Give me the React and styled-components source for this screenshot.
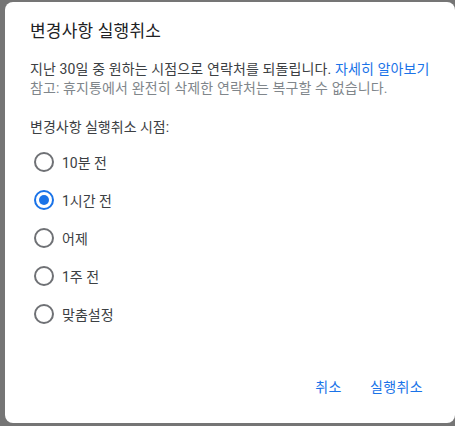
import styled, { createGlobalStyle } from 'styled-components';

const GlobalStyle = createGlobalStyle`
	html, body {
		margin: 0;
		padding: 0;
		background: #757575;
	}
	body {
		font-family: Roboto, "Noto Sans CJK KR", sans-serif;
	}
`;

const Backdrop = styled.div`
	width: 455px;
	height: 426px;
	padding: 2px 0 3px 5px;
	box-sizing: border-box;
	background: #757575;
`;

const Dialog = styled.div`
	width: 450px;
	height: 421px;
	box-sizing: border-box;
	background: #fff;
	border-radius: 8px;
	padding: 17px 24px 0 25px;
	display: flex;
	flex-direction: column;
	color: #202124;
`;

const Title = styled.h2`
	margin: 0;
	font-size: 17px;
	font-weight: 400;
	line-height: 24px;
	letter-spacing: 0.2px;
`;

const Desc = styled.p`
	margin: 17px 0 0;
	font-size: 14px;
	line-height: 19px;
	letter-spacing: 0.12px;
	color: ${({ $muted }) => ($muted ? '#80868b' : '#3c4043')};
	& + & {
		margin-top: 0;
	}
	a {
		color: #1a73e8;
		text-decoration: none;
	}
`;

const Label = styled.div`
	margin-top: 20px;
	font-size: 14px;
	line-height: 19px;
	color: #3c4043;
`;

const Options = styled.div`
	display: flex;
	flex-direction: column;
	gap: 18px;
	margin-top: 15px;
`;

const Option = styled.label`
	display: flex;
	align-items: center;
	gap: 8px;
	height: 20px;
	font-size: 14px;
	color: #3c4043;
	padding-left: 4px;
`;

const Radio = styled.span`
	width: 20px;
	height: 20px;
	box-sizing: border-box;
	border-radius: 50%;
	border: 2px solid ${({ $checked }) => ($checked ? '#1a73e8' : '#6f7175')};
	display: flex;
	align-items: center;
	justify-content: center;
	&::after {
		content: '';
		width: 10px;
		height: 10px;
		border-radius: 50%;
		background: #1a73e8;
		display: ${({ $checked }) => ($checked ? 'block' : 'none')};
	}
`;

const Actions = styled.div`
	margin-top: auto;
	display: flex;
	justify-content: flex-end;
	gap: 12px;
	padding-bottom: 19px;
`;

const TextButton = styled.button`
	background: none;
	border: none;
	padding: 0 8px;
	height: 36px;
	font-family: Roboto, "Noto Sans CJK KR", sans-serif;
	font-size: 14px;
	font-weight: 400;
	letter-spacing: 0.4px;
	color: #1a73e8;
	cursor: pointer;
`;

const options = [
	{ id: '10m', label: '10분 전' },
	{ id: '1h', label: '1시간 전' },
	{ id: 'yd', label: '어제' },
	{ id: '1w', label: '1주 전' },
	{ id: 'custom', label: '맞춤설정' },
];

const App = () => {
	const selected = '1h';
	return (
		<>
			<GlobalStyle />
			<Backdrop>
				<Dialog>
					<Title>변경사항 실행취소</Title>
					<Desc>
						지난 30일 중 원하는 시점으로 연락처를 되돌립니다. <a href="#">자세히 알아보기</a>
					</Desc>
					<Desc $muted>참고: 휴지통에서 완전히 삭제한 연락처는 복구할 수 없습니다.</Desc>
					<Label>변경사항 실행취소 시점:</Label>
					<Options>
						{options.map((opt) => (
							<Option key={opt.id}>
								<Radio $checked={opt.id === selected} />
								{opt.label}
							</Option>
						))}
					</Options>
					<Actions>
						<TextButton>취소</TextButton>
						<TextButton>실행취소</TextButton>
					</Actions>
				</Dialog>
			</Backdrop>
		</>
	);
};

export default App;
